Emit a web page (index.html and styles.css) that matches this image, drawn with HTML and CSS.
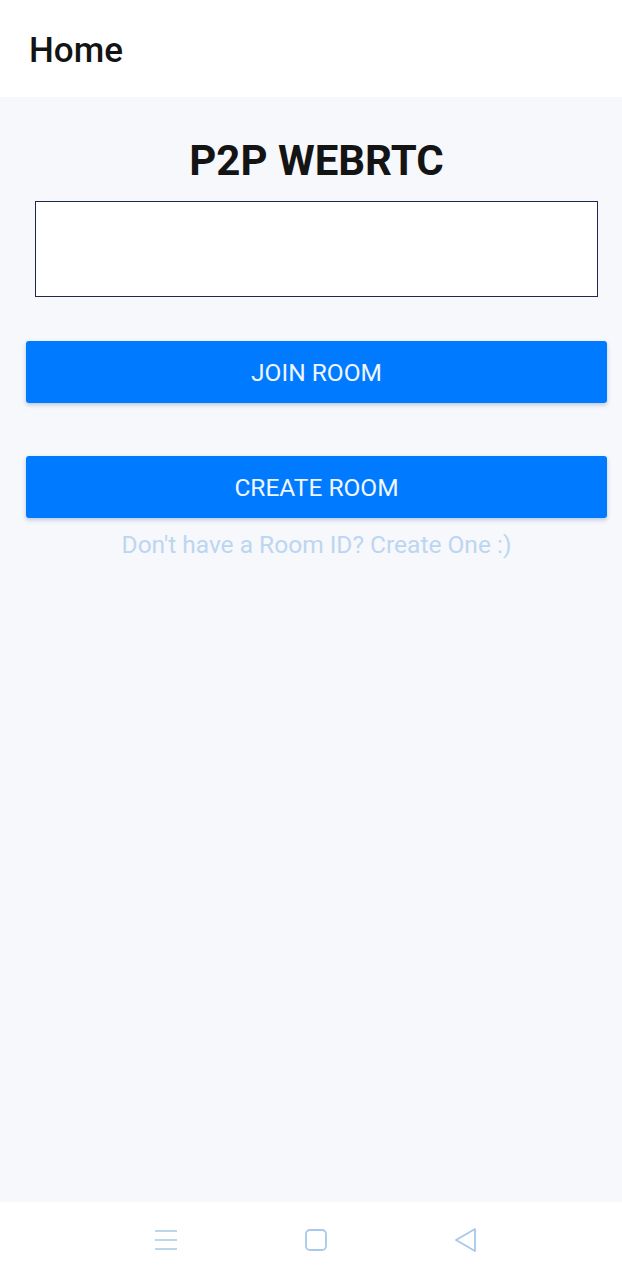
FILE: index.html
```html
<!DOCTYPE html>
<html>
<head>
<meta charset="utf-8">
<link rel="stylesheet" href="styles.css">
</head>
<body>
<div class="app">
  <header class="topbar"><span class="topbar-title">Home</span></header>
  <main class="content">
    <h1 class="title">P2P WEBRTC</h1>
    <input class="room-input" type="text">
    <button class="btn btn-join">JOIN ROOM</button>
    <button class="btn btn-create">CREATE ROOM</button>
    <p class="hint">Don't have a Room ID? Create One :)</p>
  </main>
  <nav class="navbar">
    <svg class="nav-icon" width="24" height="24" viewBox="0 0 24 24"><path d="M1 3H23M1 12H23M1 21H23" stroke="#a7c9ea" stroke-width="1.6" fill="none"/></svg>
    <svg class="nav-icon" width="24" height="24" viewBox="0 0 24 24"><rect x="2" y="2" width="20" height="20" rx="4" stroke="#a7c9ea" stroke-width="1.8" fill="none"/></svg>
    <svg class="nav-icon" width="24" height="24" viewBox="0 0 24 24"><path d="M21 1V23L2 12Z" stroke="#a7c9ea" stroke-width="1.8" stroke-linejoin="round" fill="none"/></svg>
  </nav>
</div>
</body>
</html>
```
FILE: styles.css
```css
html, body {
  margin: 0;
  padding: 0;
}
body {
  font-family: Roboto, "Liberation Sans", sans-serif;
  background: #f6f8fc;
}
.app {
  width: 622px;
  height: 1280px;
  display: flex;
  flex-direction: column;
}
.topbar {
  height: 97px;
  background: #ffffff;
  display: flex;
  align-items: center;
  padding-left: 29px;
  box-sizing: border-box;
}
.topbar-title {
  font-size: 35px;
  font-weight: 500;
  color: #141414;
  margin-top: 4px;
}
.content {
  flex: 1;
  display: flex;
  flex-direction: column;
  align-items: center;
  padding-left: 11px;
}
.title {
  margin: 39px 0 0;
  font-size: 42px;
  font-weight: 700;
  color: #141414;
  line-height: 50px;
  height: 50px;
}
.room-input {
  margin-top: 15px;
  width: 563px;
  height: 96px;
  box-sizing: border-box;
  border: 1px solid #1d2750;
  background: #fff;
  outline: none;
  padding: 0;
}
.btn {
  width: 581px;
  height: 62px;
  border: none;
  border-radius: 3px;
  background: #007bff;
  color: #f0f6ff;
  font-family: Roboto, "Liberation Sans", sans-serif;
  font-size: 24.5px;
  box-shadow: 0 2px 4px rgba(0, 60, 140, 0.25);
  padding: 0;
}
.btn-join {
  margin-top: 44px;
}
.btn-create {
  margin-top: 53px;
}
.hint {
  margin: 13px 0 0;
  font-size: 24.5px;
  color: #bcd6f1;
  line-height: 28px;
}
.navbar {
  height: 78px;
  background: #ffffff;
  display: flex;
  justify-content: center;
  align-items: center;
  gap: 126px;
  padding-left: 10px;
  padding-bottom: 2px;
  box-sizing: border-box;
}
.nav-icon {
  display: block;
}
```
